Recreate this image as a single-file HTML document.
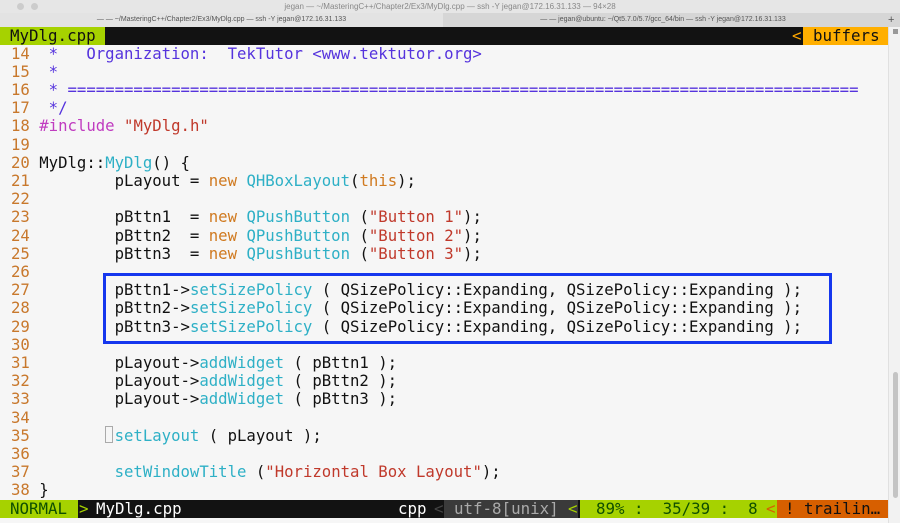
<!DOCTYPE html><html><head><style>
body{margin:0;width:900px;height:523px;overflow:hidden;background:#f6f6f6;font-family:"DejaVu Sans Mono","Liberation Mono",monospace;position:relative}
.t{position:absolute;left:0;top:0;width:900px;height:13px;background:#e6e6e6;font:8px "Liberation Sans",sans-serif;color:#888;text-align:center;line-height:13px}
.tabs{position:absolute;left:0;top:13px;width:900px;height:14px;background:#d6d6d6;font:7px "Liberation Sans",sans-serif;color:#555;line-height:14px}
.bar{position:absolute;left:0;width:888px;height:18px;font-size:15.8px;line-height:18px;white-space:pre;background:#121212}
.bar span{position:absolute;top:0;height:18px}
#code{position:absolute;left:11px;top:44.5px;font-size:15.65px;line-height:18.2px;white-space:pre;color:#111}
.n{color:#c8782c}.c{color:#5533dd}.m{color:#c03cc0}.s{color:#c0392b}.k{color:#d07a20}.f{color:#2eb0c6}
</style></head><body>
<div class="t">jegan — ~/MasteringC++/Chapter2/Ex3/MyDlg.cpp — ssh -Y jegan@172.16.31.133 — 94×28</div>
<div style="position:absolute;left:17px;top:3px;width:7px;height:7px;border-radius:50%;background:#ccc"></div>
<div style="position:absolute;left:31px;top:3px;width:7px;height:7px;border-radius:50%;background:#ccc"></div>
<div class="tabs"><span style="position:absolute;left:0;width:443px;text-align:center;background:#e3e3e3">— — ~/MasteringC++/Chapter2/Ex3/MyDlg.cpp — ssh -Y jegan@172.16.31.133</span><span style="position:absolute;left:443px;width:440px;text-align:center">— — jegan@ubuntu: ~/Qt5.7.0/5.7/gcc_64/bin — ssh -Y jegan@172.16.31.133</span><span style="position:absolute;left:888px;font-size:11px">+</span></div>
<div class="bar" style="top:27px">
<span style="left:0;width:105px;background:#a6d200;color:#111;padding-left:10px;box-sizing:border-box">MyDlg.cpp</span>
<span style="left:792px;color:#ffa800">&lt;</span>
<span style="left:803px;width:85px;background:#ffaf00;color:#111;padding-left:10px;box-sizing:border-box">buffers</span></div>
<div style="position:absolute;left:888px;top:27px;width:12px;height:496px;background:#f2f2f2;border-left:1px solid #e0e0e0"></div>
<div style="position:absolute;left:893px;top:372px;width:5px;height:126px;background:#c4c4c4;border-radius:3px"></div>
<div style="position:absolute;left:893px;top:29px;width:5px;height:5px;background:#999"></div>
<div id="code"><span class="n">14</span> <span class="c"> *   Organization:  TekTutor &lt;www.tektutor.org&gt;</span>
<span class="n">15</span> <span class="c"> *</span>
<span class="n">16</span> <span class="c"> * ====================================================================================</span>
<span class="n">17</span> <span class="c"> */</span>
<span class="n">18</span> <span class="m">#include</span> <span class="s">"MyDlg.h"</span>
<span class="n">19</span>
<span class="n">20</span> MyDlg::<span class="f">MyDlg</span>() {
<span class="n">21</span>         pLayout = <span class="k">new</span> <span class="f">QHBoxLayout</span>(<span class="k">this</span>);
<span class="n">22</span>
<span class="n">23</span>         pBttn1  = <span class="k">new</span> <span class="f">QPushButton</span> (<span class="s">"Button 1"</span>);
<span class="n">24</span>         pBttn2  = <span class="k">new</span> <span class="f">QPushButton</span> (<span class="s">"Button 2"</span>);
<span class="n">25</span>         pBttn3  = <span class="k">new</span> <span class="f">QPushButton</span> (<span class="s">"Button 3"</span>);
<span class="n">26</span>
<span class="n">27</span>         pBttn1-&gt;<span class="f">setSizePolicy</span> ( QSizePolicy::Expanding, QSizePolicy::Expanding );
<span class="n">28</span>         pBttn2-&gt;<span class="f">setSizePolicy</span> ( QSizePolicy::Expanding, QSizePolicy::Expanding );
<span class="n">29</span>         pBttn3-&gt;<span class="f">setSizePolicy</span> ( QSizePolicy::Expanding, QSizePolicy::Expanding );
<span class="n">30</span>
<span class="n">31</span>         pLayout-&gt;<span class="f">addWidget</span> ( pBttn1 );
<span class="n">32</span>         pLayout-&gt;<span class="f">addWidget</span> ( pBttn2 );
<span class="n">33</span>         pLayout-&gt;<span class="f">addWidget</span> ( pBttn3 );
<span class="n">34</span>
<span class="n">35</span>         <span class="f">setLayout</span> ( pLayout );
<span class="n">36</span>
<span class="n">37</span>         <span class="f">setWindowTitle</span> (<span class="s">"Horizontal Box Layout"</span>);
<span class="n">38</span> }</div>
<div style="position:absolute;left:105px;top:426px;width:8px;height:17px;border:1px solid #aaa;box-sizing:border-box"></div>
<div style="position:absolute;left:103px;top:273px;width:729px;height:71px;border:3px solid #1537ee;box-sizing:border-box"></div>
<div class="bar" style="top:500px">
<span style="left:0;width:78px;background:#a6d200;color:#0f4f00;padding-left:10px;box-sizing:border-box">NORMAL</span>
<span style="left:79px;color:#a6d200">&gt;</span>
<span style="left:96px;color:#fff">MyDlg.cpp</span>
<span style="left:398px;color:#fff">cpp</span>
<span style="left:434px;color:#444">&lt;</span>
<span style="left:444px;width:134px;background:#3a3a3a;color:#aaa;padding-left:10px;box-sizing:border-box">utf-8[unix]</span>
<span style="left:568px;color:#a6d200">&lt;</span>
<span style="left:580px;width:197px;background:#a6d200;color:#0f4f00;padding-left:16px;box-sizing:border-box">89% :  35/39 :  8</span>
<span style="left:766px;color:#d75f00">&lt;</span>
<span style="left:777px;width:111px;background:#d75f00;color:#111;padding-left:8px;box-sizing:border-box">! trailin…</span></div>
</body></html>
